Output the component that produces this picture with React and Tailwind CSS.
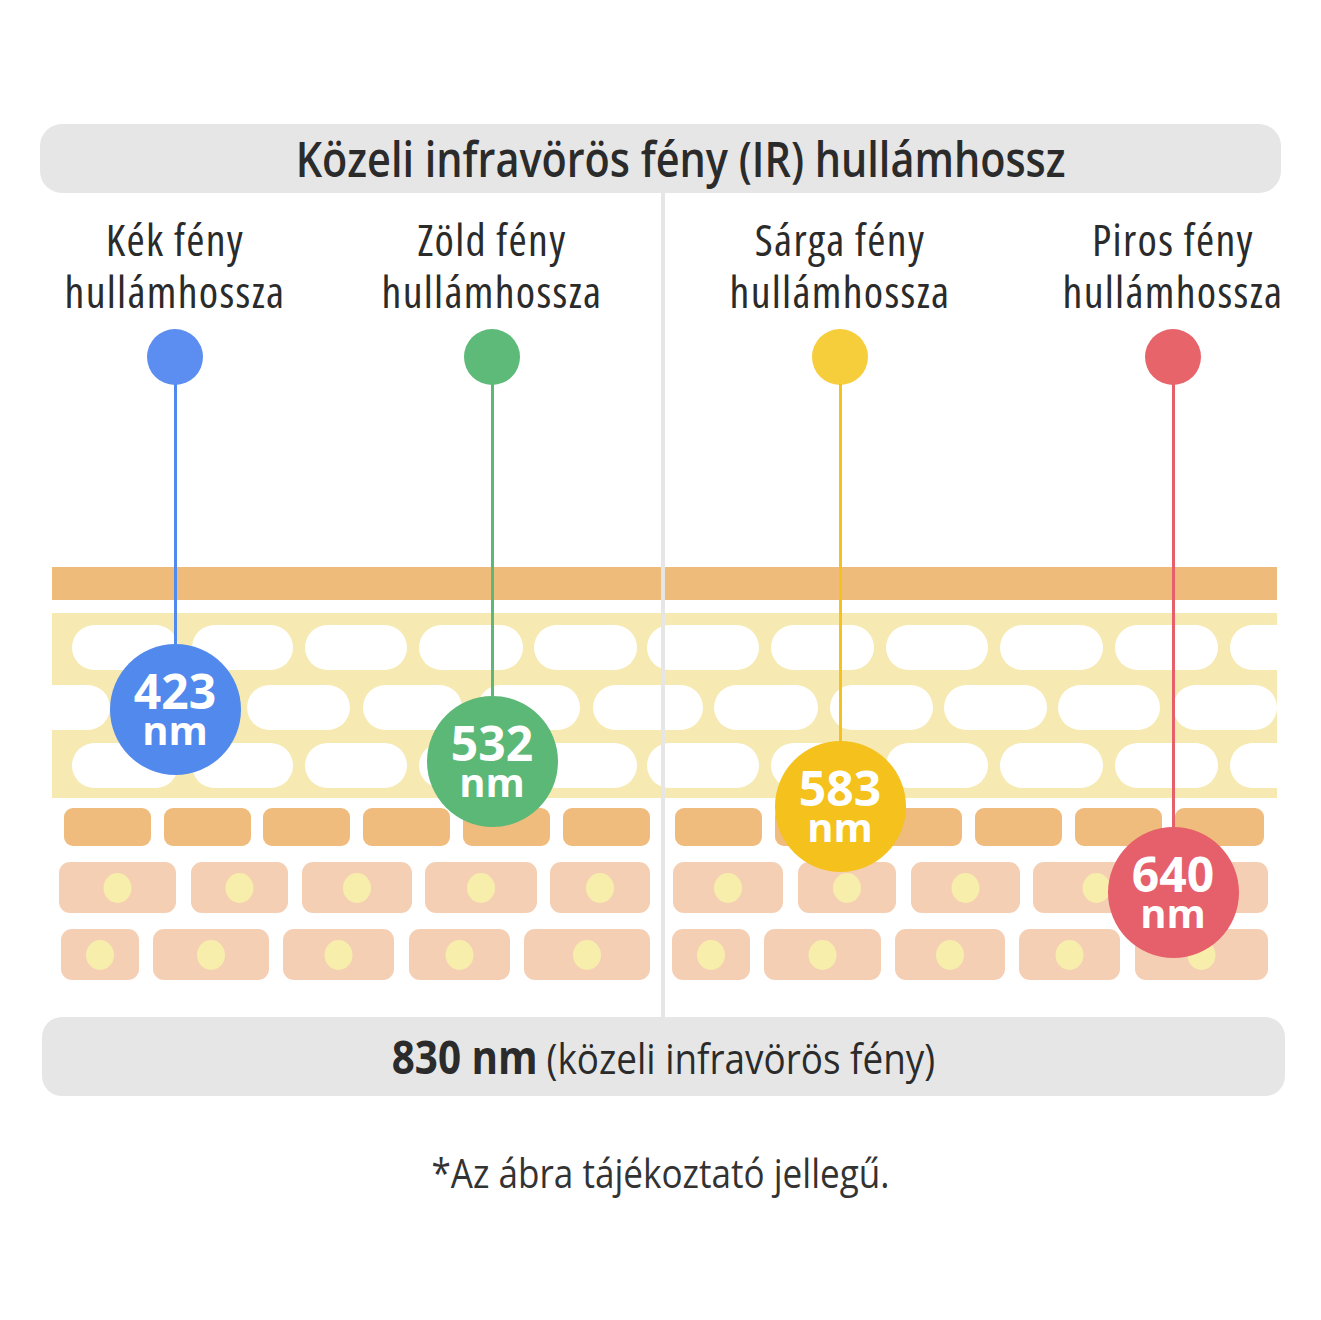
const lights = [
  { name: 'Kék fény', nm: '423', dot: 'bg-[#5b8ef0]', badge: 'bg-[#5289ed]', stem: 'h-[260px]' },
  { name: 'Zöld fény', nm: '532', dot: 'bg-[#5dba78]', badge: 'bg-[#5bb876]', stem: 'h-[312px]' },
  { name: 'Sárga fény', nm: '583', dot: 'bg-[#f6cd3a]', badge: 'bg-[#f4c11d]', stem: 'h-[357px]' },
  { name: 'Piros fény', nm: '640', dot: 'bg-[#e8646b]', badge: 'bg-[#e5606a]', stem: 'h-[443px]' },
];

// white fat-cell pills in the yellow layer, [x, width]
const pillsA = [[72, 106], [192, 101], [305, 102], [419, 104], [534, 103], [647, 112], [771, 103], [886, 102], [1000, 103], [1115, 103], [1230, 103]];
const pillsB = [[10, 100], [132, 101], [247, 103], [363, 99], [478, 102], [593, 110], [714, 104], [830, 103], [944, 103], [1058, 102], [1173, 104]];

const basal = [64, 164, 263, 363, 463, 563, 675, 775, 875, 975, 1075, 1175];

const cellsTop = [[59, 117], [191, 97], [302, 110], [425, 112], [550, 100], [673, 110], [798, 98], [911, 109], [1033, 127], [1175, 93]];
const cellsBottom = [[61, 78], [153, 116], [283, 111], [409, 101], [524, 126], [672, 78], [764, 117], [895, 110], [1019, 101], [1135, 133]];

function Skin() {
  return (
    <svg width="1321" height="420" viewBox="0 567 1321 420" className="block">
      <defs>
        <clipPath id="fat">
          <rect x="52" y="613" width="1225" height="185" />
        </clipPath>
      </defs>
      <rect x="52" y="567" width="1225" height="33" fill="#efbb7a" />
      <rect x="52" y="613" width="1225" height="185" fill="#f6eab2" />
      <g clipPath="url(#fat)" fill="#ffffff">
        {pillsA.map(([x, w]) => (
          <rect key={'a' + x} x={x} y="625" width={w} height="45" rx="22.5" />
        ))}
        {pillsB.map(([x, w]) => (
          <rect key={'b' + x} x={x} y="685" width={w} height="45" rx="22.5" />
        ))}
        {pillsA.map(([x, w]) => (
          <rect key={'c' + x} x={x} y="743" width={w} height="45" rx="22.5" />
        ))}
      </g>
      {basal.map((x, i) => (
        <rect key={'o' + x} x={x} y="808" width={i === 11 ? 89 : 87} height="38" rx="9" fill="#efbc7d" />
      ))}
      {cellsTop.map(([x, w]) => (
        <g key={'t' + x}>
          <rect x={x} y="862" width={w} height="51" rx="11" fill="#f5cfb4" />
          <ellipse cx={x + w / 2} cy="888" rx="14" ry="15" fill="#f7eeab" />
        </g>
      ))}
      {cellsBottom.map(([x, w]) => (
        <g key={'m' + x}>
          <rect x={x} y="929" width={w} height="51" rx="11" fill="#f5cfb4" />
          <ellipse cx={x + w / 2} cy="955" rx="14" ry="15" fill="#f7eeab" />
        </g>
      ))}
    </svg>
  );
}

export default function App() {
  return (
    <div className="w-[1321px] h-[1320px] bg-white text-[#2b2b2b] font-['Open_Sans','Noto_Sans',sans-serif] pt-[124px]">
      <div className="mx-[40px] h-[69px] rounded-[22px] bg-[#e6e6e6] flex items-center justify-center">
        <h1 className="ml-[40px] text-[48px] font-semibold leading-none scale-x-[0.862] whitespace-nowrap">
          Közeli infravörös fény (IR) hullámhossz
        </h1>
      </div>

      {/* diagram */}
      <div className="relative h-[824px]">
        <div className="absolute left-0 top-[374px]">
          <Skin />
        </div>
        <div className="absolute left-[661px] top-0 bottom-0 w-[4px] bg-[#e6e6e6]" />

        <div className="relative grid grid-cols-[350px_284px_412px_254px] pt-[20px]">
          {lights.map((l) => (
            <div key={l.nm} className="flex flex-col items-center">
              <p className="text-[44px] leading-[52px] font-stretch-condensed tracking-[1.3px] text-center">
                {l.name}
                <br />
                hullámhossza
              </p>
              <div className={`mt-[12px] size-[56px] rounded-full ${l.dot}`} />
              <div className={`w-[3px] -mt-[1px] ${l.stem} ${l.badge}`} />
              <div className={`size-[131px] rounded-full ${l.badge} flex flex-col items-center justify-center text-white font-bold`}>
                <span className="text-[48px] leading-[40px]">{l.nm}</span>
                <span className="text-[40px] leading-[37px]">nm</span>
              </div>
            </div>
          ))}
        </div>
      </div>

      <div className="mx-[42px] w-[1243px] h-[79px] rounded-[20px] bg-[#e6e6e6] flex items-center justify-center">
        <p className="flex items-baseline gap-[10px] whitespace-nowrap scale-x-[0.878]">
          <span className="text-[46px] font-bold">830 nm</span>
          <span className="text-[42px] font-medium">(közeli infravörös fény)</span>
        </p>
      </div>

      <p className="mt-[47px] text-center text-[40px] text-[#333] scale-x-[0.877]">
        *Az ábra tájékoztató jellegű.
      </p>
    </div>
  );
}
